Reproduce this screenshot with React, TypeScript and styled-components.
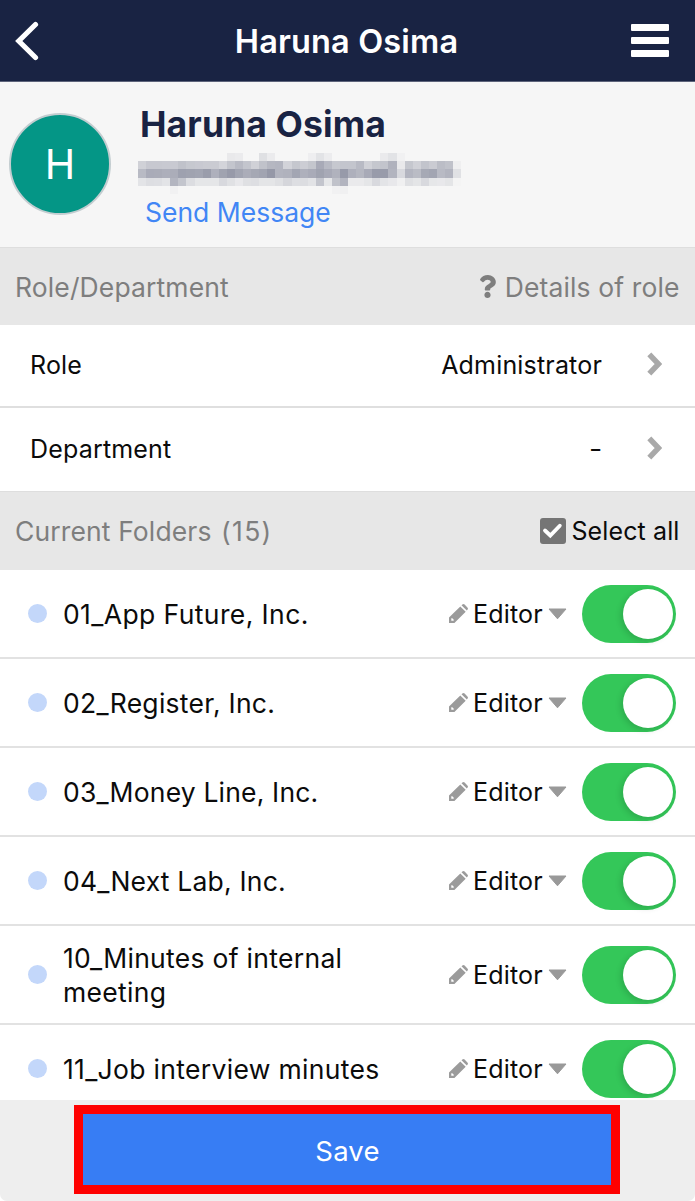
import React from 'react';
import styled, { createGlobalStyle } from 'styled-components';
import { FaQuestion } from 'react-icons/fa';

const Global = createGlobalStyle`
  * { box-sizing: border-box; }
  html, body { margin: 0; height: 100%; background: #fff; }
  body { font-family: Inter, "Liberation Sans", sans-serif; font-size: 25px; color: #0b0b0b; overflow: hidden; }
`;

const Screen = styled.div`
  display: flex;
  flex-direction: column;
  width: 695px;
  height: 1201px;
  overflow: hidden;
  border-radius: 0 0 7px 7px;
  background: #fff;
`;

const Header = styled.header`
  flex: none;
  display: flex;
  align-items: center;
  justify-content: space-between;
  height: 82px;
  padding: 0 26px 0 15px;
  background: #192343;
  border-bottom: 1px solid #5d647b;
  color: #fff;
`;

const HeaderTitle = styled.h1`
  margin: 0;
  padding: 2px 0 0 23px;
  font-size: 32.5px;
  font-weight: 600;
  line-height: 40px;
  letter-spacing: 0.15px;
`;

const Profile = styled.section`
  flex: none;
  display: flex;
  height: 165px;
  padding: 21px 0 0 9px;
  background: #f6f6f6;
`;

const Avatar = styled.div`
  display: flex;
  align-items: center;
  justify-content: center;
  width: 102px;
  height: 102px;
  margin-top: 10px;
  border: 2px solid #c3cdd0;
  border-radius: 50%;
  background: #049686;
  color: #fff;
  font-size: 41px;
`;

const ProfileText = styled.div`
  display: flex;
  flex-direction: column;
  padding-left: 27px;
`;

const ProfileName = styled.h2`
  margin: 0 0 7px 2px;
  font-size: 35.5px;
  font-weight: 700;
  line-height: 43px;
  letter-spacing: 0.1px;
  color: #192343;
`;

const MessageLink = styled.a`
  margin: 1px 0 0 7px;
  font-size: 26.5px;
  line-height: 34px;
  color: #4186f5;
`;

const SectionHeader = styled.div<{ $height: number }>`
  flex: none;
  display: flex;
  align-items: center;
  justify-content: space-between;
  height: ${p => p.$height}px;
  padding: 0 15.5px 0 15px;
  border-top: 1px solid #dedede;
  background: #e7e7e7;
  color: #7e7e7e;
  font-size: 26.5px;
  letter-spacing: 0.12px;
`;

const FolderCount = styled.span`
  margin-left: 2px;
  letter-spacing: 1.3px;
`;

const RoleHelp = styled.span`
  display: flex;
  align-items: center;
  gap: 6px;
`;

const SelectAll = styled.label`
  display: flex;
  align-items: center;
  gap: 5px;
  color: #0b0b0b;
  font-size: 25px;
`;

const SettingRow = styled.div<{ $last?: boolean }>`
  flex: none;
  display: flex;
  align-items: center;
  height: 83px;
  padding: 0 33px ${p => (p.$last ? 2 : 1)}px 30px;
  border-bottom: ${p => (p.$last ? '0' : '2px solid #dfdfdf')};
  letter-spacing: 0.18px;

  svg {
    margin-bottom: 2px;
  }
`;

const SettingValue = styled.span<{ $wide?: boolean }>`
  margin: 0 45px 0 auto;
  transform: ${p => (p.$wide ? 'scaleX(1.15)' : 'none')};
`;

const FolderList = styled.div`
  flex: 1;
  min-height: 0;
  overflow: hidden;
`;

const FolderRow = styled.div<{ $height: number }>`
  display: flex;
  align-items: center;
  height: ${p => p.$height}px;
  padding: 0 19px 0 28px;
  border-bottom: 2px solid #e2e2e2;
`;

const Dot = styled.i`
  flex: none;
  width: 19px;
  height: 19px;
  margin-right: 16px;
  border-radius: 50%;
  background: #c3d7fa;
`;

const FolderName = styled.span<{ $spacing: number }>`
  flex: 1;
  font-size: 26.5px;
  line-height: 34px;
  letter-spacing: ${p => p.$spacing}px;
  white-space: pre-line;
`;

const RoleSelect = styled.span`
  display: flex;
  align-items: center;
  gap: 5px;
  width: 118px;
  margin-right: 15px;
  letter-spacing: 0.2px;
`;

const Toggle = styled.span`
  display: flex;
  align-items: center;
  justify-content: flex-end;
  width: 94px;
  height: 58px;
  padding: 0 3.5px;
  border-radius: 29px;
  background: #34c759;
`;

const Knob = styled.span`
  width: 50px;
  height: 50px;
  border-radius: 50%;
  background: #fff;
  box-shadow: -2px 2px 6px rgba(0, 0, 0, 0.15);
`;

const Footer = styled.footer`
  flex: none;
  display: flex;
  height: 101px;
  padding: 5px 75px 7px 74px;
  background: #eee;
`;

const SaveButton = styled.button`
  flex: 1;
  padding: 3px 0 0 1px;
  border: 9px solid #fe0000;
  background: #377df4;
  color: #fff;
  font-family: inherit;
  font-size: 27.5px;
  letter-spacing: 0.2px;
`;

const EMPTY = '..';
const pad = (cells: Record<number, string>) =>
  Array.from({ length: 40 }, (_, i) => cells[i] ?? EMPTY).join(' ');

// Grey levels of the pixelated address, one hex pair per block.
const mosaic = [
  { y: 0, h: 8, cells: pad({ 11: 'e9', 12: 'eb', 15: 'df', 16: 'eb', 21: 'ee', 22: 'e2', 23: 'ec', 30: 'ea', 31: 'e2', 32: 'f1' }) },
  { y: 8, h: 8, cells: 'd0 c7 c7 c8 c8 c0 c6 c8 ca ca d3 c3 b8 c3 d0 c0 b5 b3 d2 c5 cc c4 a8 b8 c6 c3 c3 b8 d0 c5 c2 b0 e9 c5 d0 c2 ca bb c0 ef' },
  { y: 16, h: 9, cells: 'b8 a9 aa ad ab 9e a0 a2 9a ae a0 97 a2 ab a5 a1 95 b2 b0 a3 ae a9 a0 a8 b0 97 ae b5 a8 98 98 b2 d8 b3 ba a6 a2 b8 b2 e0' },
  { y: 25, h: 8, cells: 'e3 dd de e3 b3 c3 dc e5 e5 e5 d8 e0 e8 df dd e4 e4 df d5 dd dc e2 c3 e6 c0 b2 ea ea e5 d8 e3 e8 f0 df e4 d8 e6 e8 e4 f4' },
  { y: 33, h: 8, cells: pad({ 4: 'f1', 24: 'f1', 25: 'f0' }) },
];

const blockColor = (hex: string) => {
  const g = parseInt(hex, 16);
  const tint = (246 - g) / 95;
  return `rgb(${g}, ${Math.round(g + 3 * tint)}, ${Math.round(g + 18 * tint)})`;
};

const blockX = (i: number) => Math.round(i * 8.08);

const MaskedEmail = () => (
  <svg width="324" height="41" shapeRendering="crispEdges">
    {mosaic.map(row =>
      row.cells.split(' ').map((hex, i) =>
        hex === EMPTY ? null : (
          <rect
            key={`${row.y}-${i}`}
            x={blockX(i)}
            y={row.y}
            width={blockX(i + 1) - blockX(i)}
            height={row.h}
            fill={blockColor(hex)}
          />
        ),
      ),
    )}
  </svg>
);

const BackIcon = () => (
  <svg width="24" height="40" viewBox="0 0 24 40">
    <path d="M20.5 3.5L3.8 20L20.5 36.5" fill="none" stroke="#fff" strokeWidth="5.2" strokeLinecap="round" />
  </svg>
);

const MenuIcon = () => (
  <svg width="38" height="33" fill="#fff">
    <rect width="38" height="7" rx="1" />
    <rect y="13" width="38" height="7" rx="1" />
    <rect y="26" width="38" height="7" rx="1" />
  </svg>
);

const ChevronIcon = () => (
  <svg width="15" height="24" viewBox="0 0 15 24">
    <path d="M2.3 2.3L11.5 12L2.3 21.7" fill="none" stroke="#a9a9a9" strokeWidth="5.5" />
  </svg>
);

const CheckedIcon = () => (
  <svg width="26" height="26" viewBox="0 0 26 26">
    <rect width="26" height="26" rx="3" fill="#757575" />
    <path d="M5 12.5L10.3 17.5L19.8 7.7" fill="none" stroke="#fff" strokeWidth="3.8" strokeLinecap="round" />
  </svg>
);

const PencilIcon = () => (
  <svg width="19" height="19" viewBox="0 0 19 19" fill="#9b9b9b">
    <path fillRule="evenodd" d="M0 19V13.6L11.3 2.4L16.7 7.8L5.4 19ZM2.3 14.6V16.7H4.4L5 16L3 14Z" />
    <path d="M12.5 1.3L13.4 0.5Q14.5 -0.4 15.6 0.6L18.4 3.4Q19.4 4.5 18.6 5.6L17.8 6.6Z" />
  </svg>
);

const CaretIcon = () => (
  <svg width="19" height="12" viewBox="0 0 19 12">
    <path d="M1 1H18L9.5 10.8Z" fill="#999" stroke="#999" strokeLinejoin="round" />
  </svg>
);

const folders = [
  { name: '01_App Future, Inc.', height: 89, spacing: 0.4 },
  { name: '02_Register, Inc.', height: 89, spacing: 0.28 },
  { name: '03_Money Line, Inc.', height: 89, spacing: 0.18 },
  { name: '04_Next Lab, Inc.', height: 89, spacing: 0.2 },
  { name: '10_Minutes of internal\nmeeting', height: 99, spacing: 0.3 },
  { name: '11_Job interview minutes', height: 89, spacing: 0.32 },
];

export default function App() {
  return (
    <Screen>
      <Global />
      <Header>
        <BackIcon />
        <HeaderTitle>Haruna Osima</HeaderTitle>
        <MenuIcon />
      </Header>
      <Profile>
        <Avatar>H</Avatar>
        <ProfileText>
          <ProfileName>Haruna Osima</ProfileName>
          <MaskedEmail />
          <MessageLink>Send Message</MessageLink>
        </ProfileText>
      </Profile>
      <SectionHeader $height={78}>
        <span>Role/Department</span>
        <RoleHelp>
          <FaQuestion size={23} width={16} />
          <span>Details of role</span>
        </RoleHelp>
      </SectionHeader>
      <SettingRow>
        <span>Role</span>
        <SettingValue>Administrator</SettingValue>
        <ChevronIcon />
      </SettingRow>
      <SettingRow $last>
        <span>Department</span>
        <SettingValue $wide>-</SettingValue>
        <ChevronIcon />
      </SettingRow>
      <SectionHeader $height={79}>
        <span>
          Current Folders <FolderCount>(15)</FolderCount>
        </span>
        <SelectAll>
          <CheckedIcon />
          <span>Select all</span>
        </SelectAll>
      </SectionHeader>
      <FolderList>
        {folders.map(f => (
          <FolderRow key={f.name} $height={f.height}>
            <Dot />
            <FolderName $spacing={f.spacing}>{f.name}</FolderName>
            <RoleSelect>
              <PencilIcon />
              <span>Editor</span>
              <CaretIcon />
            </RoleSelect>
            <Toggle>
              <Knob />
            </Toggle>
          </FolderRow>
        ))}
      </FolderList>
      <Footer>
        <SaveButton>Save</SaveButton>
      </Footer>
    </Screen>
  );
}
